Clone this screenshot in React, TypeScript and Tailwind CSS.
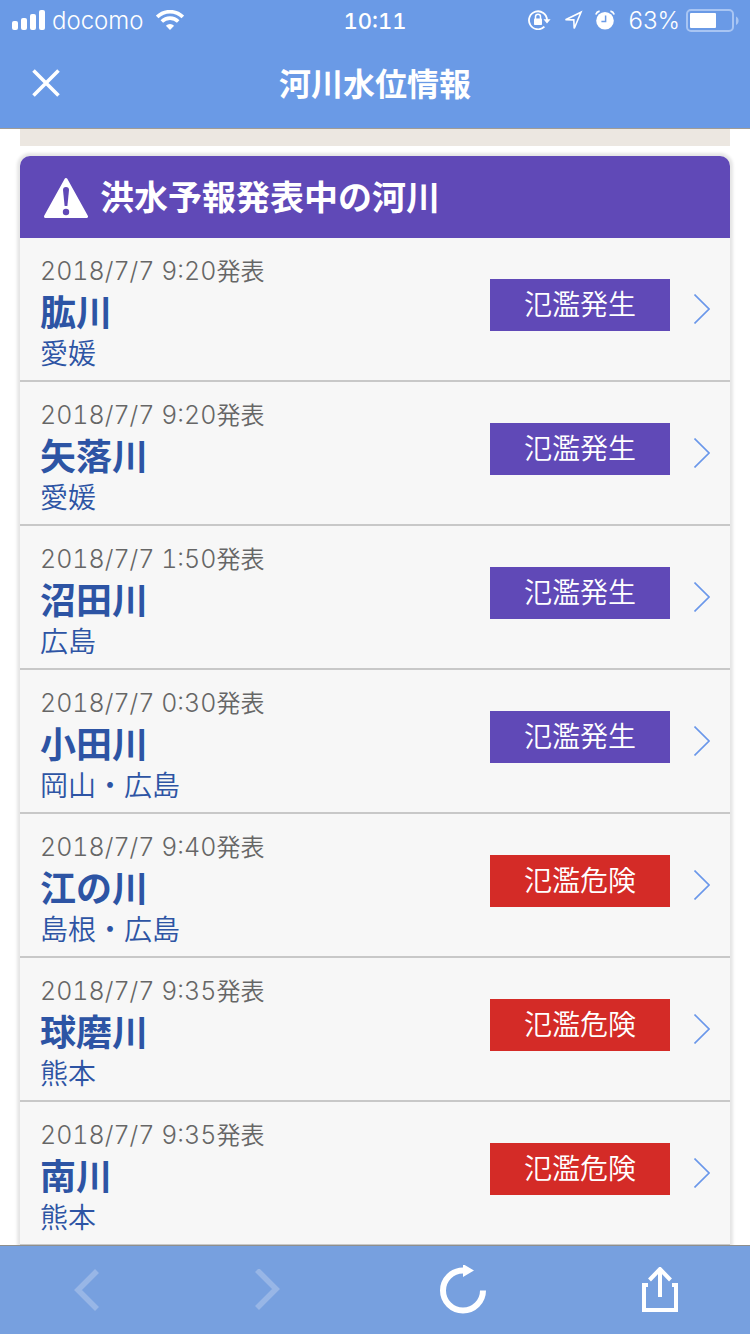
type Level = "occurred" | "danger";

type River = {
  time: string;
  name: string;
  area: string;
  level: Level;
};

const rivers: River[] = [
  { time: "2018/7/7 9:20", name: "肱川", area: "愛媛", level: "occurred" },
  { time: "2018/7/7 9:20", name: "矢落川", area: "愛媛", level: "occurred" },
  { time: "2018/7/7 1:50", name: "沼田川", area: "広島", level: "occurred" },
  { time: "2018/7/7 0:30", name: "小田川", area: "岡山・広島", level: "occurred" },
  { time: "2018/7/7 9:40", name: "江の川", area: "島根・広島", level: "danger" },
  { time: "2018/7/7 9:35", name: "球磨川", area: "熊本", level: "danger" },
  { time: "2018/7/7 9:35", name: "南川", area: "熊本", level: "danger" },
];

const levels = {
  occurred: { label: "氾濫発生", className: "bg-[#6049b7]" },
  danger: { label: "氾濫危険", className: "bg-[#d42b27]" },
};

function StatusBar() {
  return (
    <div className="grid h-10 grid-cols-[1fr_auto_1fr] items-center pl-3 pr-3 font-['Inter',sans-serif] text-white">
      <div className="flex items-center">
        <svg width="34" height="20" viewBox="0 0 34 20" fill="currentColor" aria-hidden="true">
          <rect x="0" y="11" width="6" height="9" rx="2" />
          <rect x="9" y="8" width="6" height="12" rx="2" />
          <rect x="18" y="4" width="6" height="16" rx="2" />
          <rect x="27" y="0" width="6" height="20" rx="2" />
        </svg>
        <span className="ml-1.5 pt-0.5 text-2xl font-light">docomo</span>
        <svg className="ml-3" width="28" height="20" viewBox="0 0 28 20" aria-hidden="true">
          <g fill="none" stroke="#fff" strokeWidth="3.6">
            <path d="M1.2 6.9A18.2 18.2 0 0 1 26.8 6.9" />
            <path d="M5.8 11.5A11.7 11.7 0 0 1 22.2 11.5" />
          </g>
          <path d="M14 20L9.9 15.8A5.8 5.8 0 0 1 18.1 15.8Z" fill="#fff" />
        </svg>
      </div>
      <span className="pt-0.5 text-[22px] font-medium tabular-nums">10:11</span>
      <div className="flex items-center justify-end">
        <svg width="23" height="20" viewBox="0 0 23 20" aria-hidden="true">
          <path d="M16.4 16.6A9 9 0 1 1 19 10" fill="none" stroke="#fff" strokeWidth="1.8" />
          <path d="M15.5 9.2H22.6L19 13.6Z" fill="#fff" />
          <rect x="6" y="8.4" width="8" height="6.6" rx="0.8" fill="#fff" />
          <path d="M7.5 9V6.8a2.5 2.5 0 0 1 5 0V9" fill="none" stroke="#fff" strokeWidth="1.5" />
        </svg>
        <svg className="ml-3" width="20" height="21" viewBox="0 0 20 21" aria-hidden="true">
          <path d="M2.5 9.8L18 2.2L11.2 18.5L10.8 9.9Z" fill="none" stroke="#fff" strokeWidth="1.6" />
        </svg>
        <svg className="ml-3" width="20" height="20" viewBox="0 0 20 20" aria-hidden="true">
          <circle cx="10" cy="10.8" r="8.8" fill="#fff" />
          <path d="M0.8 4.6A5 5 0 0 1 4.6 1.2M15.4 1.2A5 5 0 0 1 19.2 4.6" fill="none" stroke="#fff" strokeWidth="1.8" />
          <path d="M10.6 5.6V11.4H6.4" fill="none" stroke="#6a9ae6" strokeWidth="1.5" />
        </svg>
        <span className="ml-3.5 pt-0.5 text-2xl font-light">63%</span>
        <svg className="-mr-0.5 ml-1.5" width="54" height="24" viewBox="0 0 54 24" aria-hidden="true">
          <rect x="1" y="2" width="46" height="21" rx="4" fill="none" stroke="#a8c5f3" strokeWidth="2" />
          <rect x="4" y="5" width="26" height="15" rx="1" fill="#fff" />
          <path d="M50 8.5C53.5 10 53.5 15.5 50 17Z" fill="#a8c5f3" />
        </svg>
      </div>
    </div>
  );
}

function Header() {
  return (
    <header className="shrink-0 border-b border-[#a09c96] bg-[#6a9ae6]">
      <StatusBar />
      <div className="grid h-22 grid-cols-[1fr_auto_1fr] items-center px-8 text-white">
        <button type="button" aria-label="閉じる" className="w-7 pb-0.5">
          <svg width="28" height="28" viewBox="0 0 28 28" aria-hidden="true">
            <path d="M1.5 1.5L26.5 26.5M26.5 1.5L1.5 26.5" stroke="currentColor" strokeWidth="3.6" />
          </svg>
        </button>
        <h1 className="pb-1 text-[32px] font-bold leading-10">河川水位情報</h1>
      </div>
    </header>
  );
}

function RiverRow({ river }: { river: River }) {
  const level = levels[river.level];
  return (
    <li className="border-b-2 border-[#c8c8c8]">
      <a href="#" className="flex items-center px-5">
        <div className="flex-1 pb-2 pt-3">
          <p className="text-2xl leading-10 font-[350] text-[#666]">
            <span className="font-['Inter',sans-serif] text-[25px] leading-none font-light tabular-nums">{river.time}</span>発表
          </p>
          <h3 className="text-4xl leading-10 font-bold text-[#2d54a4]">{river.name}</h3>
          <p className="mt-0.5 text-[28px] leading-10 font-[350] text-[#2d54a4]">{river.area}</p>
        </div>
        <div className="pb-2">
          <span className={`flex h-13 w-45 items-center justify-center pb-1 text-[28px] font-[350] text-white ${level.className}`}>
            {level.label}
          </span>
        </div>
        <svg className="ml-6" width="16" height="30" viewBox="0 0 16 30" aria-hidden="true">
          <path d="M0.5 0.5L15 15L0.5 29.5" fill="none" stroke="#6a97ea" strokeWidth="1.6" />
        </svg>
      </a>
    </li>
  );
}

function Toolbar() {
  return (
    <nav className="flex h-[89px] shrink-0 items-center justify-between border-t border-[#8f8f8c] bg-[#77a0df] pl-[74px] pr-[71px] text-white">
      <button type="button" aria-label="戻る" disabled className="text-[#98b6e6]">
        <svg width="26" height="42" viewBox="0 0 26 42" aria-hidden="true">
          <path d="M23 2L4 21L23 40" fill="none" stroke="currentColor" strokeWidth="5.6" />
        </svg>
      </button>
      <button type="button" aria-label="進む" disabled className="text-[#98b6e6]">
        <svg width="26" height="42" viewBox="0 0 26 42" aria-hidden="true">
          <path d="M2 1L21 20L2 39" fill="none" stroke="currentColor" strokeWidth="5.6" />
        </svg>
      </button>
      <button type="button" aria-label="再読み込み">
        <svg width="50" height="50" viewBox="0 0 50 50" aria-hidden="true">
          <path d="M27 5.5A20 20 0 1 0 47 25.5" fill="none" stroke="currentColor" strokeWidth="6" />
          <path d="M27 -1L38 5.5L27 12Z" fill="currentColor" />
        </svg>
      </button>
      <button type="button" aria-label="共有">
        <svg width="38" height="47" viewBox="0 0 38 47" fill="none" stroke="currentColor" aria-hidden="true">
          <path d="M7 18H3V43H35V18H31" strokeWidth="4" />
          <path d="M19 30V2M8.5 13L19 2L29.5 13" strokeWidth="4" />
        </svg>
      </button>
    </nav>
  );
}

export default function App() {
  return (
    <div className="flex h-screen flex-col bg-white font-['Noto_Sans_CJK_JP',sans-serif]">
      <Header />
      <main className="min-h-0 flex-1 overflow-hidden px-5">
        <div className="h-[17px] bg-[#ece7e1]" />
        <section className="mt-2.5 rounded-t-[10px] bg-[#f7f7f7] shadow-[0_0_3px_3px_#e6e6e6]">
          <div className="flex h-[82px] items-center rounded-t-[10px] bg-[#6049b7] px-6 text-white">
            <svg className="mr-3" width="44" height="42" viewBox="0 0 44 42" aria-hidden="true">
              <path d="M22 3.5L42.5 40.5H1.5Z" fill="#fff" stroke="#fff" strokeWidth="3" strokeLinejoin="round" />
              <path d="M19 14a3 3 0 0 1 6 0L23.4 30h-2.8Z" fill="#6049b7" />
              <circle cx="22" cy="36" r="3.2" fill="#6049b7" />
            </svg>
            <h2 className="pb-1 text-[34px] font-bold">洪水予報発表中の河川</h2>
          </div>
          <ul>
            {rivers.map(river => (
              <RiverRow key={river.name} river={river} />
            ))}
          </ul>
        </section>
      </main>
      <Toolbar />
    </div>
  );
}
